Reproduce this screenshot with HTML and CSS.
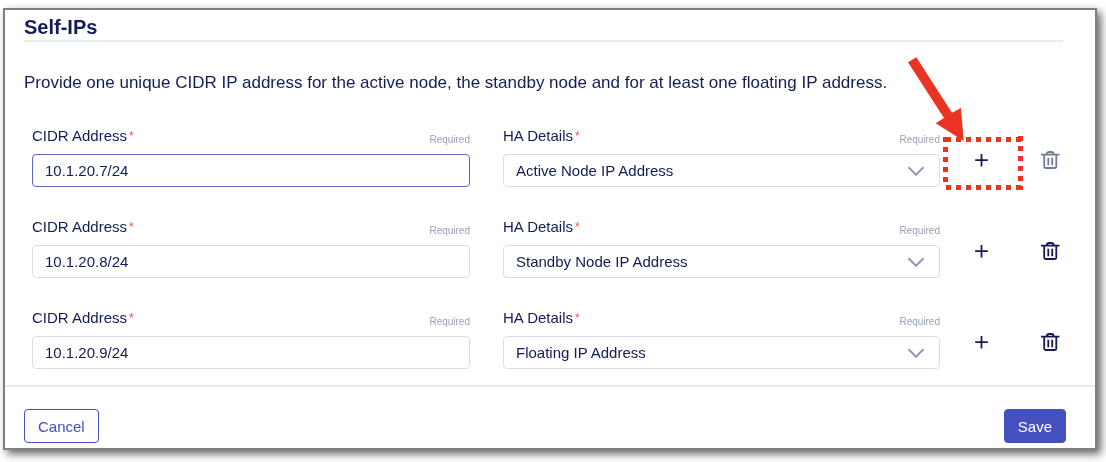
FILE: index.html
```html
<!DOCTYPE html>
<html lang="en">
<head>
<meta charset="utf-8">
<title>Self-IPs</title>
<link rel="stylesheet" href="styles.css">
</head>
<body>
<svg class="symbols" aria-hidden="true">
  <symbol id="plus" viewBox="0 0 24 24"><path d="M12.500 6v12.500M6.200 12.200h12.600"/></symbol>
  <symbol id="trash" viewBox="0 0 24 24"><path d="M3 6.600h18.500M6.200 6.600v11.900q0 1.500 1.500 1.500h9.100q1.500 0 1.500-1.500V6.600M8.700 6.300Q9 4 11 4h2.500q2 0 2.300 2.300M10.300 9.800v7.500M14.200 9.800v7.500"/></symbol>
  <symbol id="chevron" viewBox="0 0 18 10"><path d="M1.500 1.200 9 8.700l7.500-7.500"/></symbol>
</svg>
<form class="panel">
  <main class="content">
    <h2 class="title">Self-IPs</h2>
    <p class="intro">Provide one unique CIDR IP address for the active node, the standby node and for at least one floating IP address.</p>
    <div class="rows">
      <div class="row">
        <div class="field">
          <div class="caption"><label for="ip1">CIDR Address<span class="star">*</span></label><span class="required">Required</span></div>
          <input class="control active" id="ip1" type="text" value="10.1.20.7/24">
        </div>
        <div class="field">
          <div class="caption"><label for="ha1">HA Details<span class="star">*</span></label><span class="required">Required</span></div>
          <div class="picker">
            <select class="control" id="ha1"><option>Active Node IP Address</option></select>
            <svg class="chevron" aria-hidden="true"><use href="#chevron"/></svg>
          </div>
        </div>
        <div class="actions">
          <div class="callout-anchor">
            <button class="icon-button" type="button" aria-label="Add row"><svg class="icon"><use href="#plus"/></svg></button>
            <svg class="callout" viewBox="903 52 123 142" aria-hidden="true">
              <path class="arrow" d="M908 62.300 916.300 57.300 952 112.700 961 108 963.700 141 935.700 123.300 944 118Z"/>
              <path class="dots" d="M946 139.500H1023M1020.500 136V190M946 187.500H1023M945.500 137V184"/>
            </svg>
          </div>
          <button class="icon-button" type="button" aria-label="Delete row" disabled><svg class="icon"><use href="#trash"/></svg></button>
        </div>
      </div>
      <div class="row">
        <div class="field">
          <div class="caption"><label for="ip2">CIDR Address<span class="star">*</span></label><span class="required">Required</span></div>
          <input class="control" id="ip2" type="text" value="10.1.20.8/24">
        </div>
        <div class="field">
          <div class="caption"><label for="ha2">HA Details<span class="star">*</span></label><span class="required">Required</span></div>
          <div class="picker">
            <select class="control" id="ha2"><option>Standby Node IP Address</option></select>
            <svg class="chevron" aria-hidden="true"><use href="#chevron"/></svg>
          </div>
        </div>
        <div class="actions">
          <button class="icon-button" type="button" aria-label="Add row"><svg class="icon"><use href="#plus"/></svg></button>
          <button class="icon-button" type="button" aria-label="Delete row"><svg class="icon"><use href="#trash"/></svg></button>
        </div>
      </div>
      <div class="row">
        <div class="field">
          <div class="caption"><label for="ip3">CIDR Address<span class="star">*</span></label><span class="required">Required</span></div>
          <input class="control" id="ip3" type="text" value="10.1.20.9/24">
        </div>
        <div class="field">
          <div class="caption"><label for="ha3">HA Details<span class="star">*</span></label><span class="required">Required</span></div>
          <div class="picker">
            <select class="control" id="ha3"><option>Floating IP Address</option></select>
            <svg class="chevron" aria-hidden="true"><use href="#chevron"/></svg>
          </div>
        </div>
        <div class="actions">
          <button class="icon-button" type="button" aria-label="Add row"><svg class="icon"><use href="#plus"/></svg></button>
          <button class="icon-button" type="button" aria-label="Delete row"><svg class="icon"><use href="#trash"/></svg></button>
        </div>
      </div>
    </div>
  </main>
  <footer class="footer">
    <button class="button" type="button">Cancel</button>
    <button class="button primary" type="submit">Save</button>
  </footer>
</form>
</body>
</html>
```

FILE: styles.css
```css
* {
  box-sizing: border-box;
}

body {
  margin: 0;
  padding: 8px 9px 12px 3px;
  background: #fff;
  color: #131c56;
  font-family: "Liberation Sans", Arial, sans-serif;
  font-size: 15px;
}

.symbols {
  position: absolute;
  width: 0;
  height: 0;
}

.panel {
  border: 2px solid #808080;
  background: #fff;
  filter: drop-shadow(4px 4px 4px rgba(0, 0, 0, 0.6));
}

.content {
  padding: 5px 32px 16px 19px;
}

.title {
  margin: 0;
  border-bottom: 2px solid #e8ecf1;
  font-size: 20px;
  line-height: 25px;
}

.intro {
  margin: 29px 0 31px;
  font-size: 17px;
  line-height: 24px;
}

.rows {
  display: grid;
  gap: 30px;
  padding: 0 1px 0 8px;
}

.row {
  display: grid;
  grid-template-columns: 1fr 1fr auto;
}

.field + .field {
  margin-left: 17px;
}

.field:first-child {
  margin-right: 16px;
}

.caption {
  display: flex;
  justify-content: space-between;
  margin-bottom: 8px;
  line-height: 20px;
}

.star {
  margin-left: 2px;
  color: #f0563d;
  font-size: 12px;
  vertical-align: 1px;
  line-height: 12px;
}

.required {
  padding-top: 4px;
  color: #9a9fb9;
  font-size: 10px;
  line-height: 20px;
  height: 20px;
}

.control {
  display: block;
  width: 100%;
  height: 33px;
  padding: 0 12px;
  border: 1px solid #dcdee6;
  border-radius: 4px;
  outline: none;
  appearance: none;
  background: #fff;
  color: inherit;
  font: inherit;
}

.control.active {
  border-color: #5a6ac9;
}

.picker {
  position: relative;
}

.chevron {
  position: absolute;
  top: 12px;
  right: 15px;
  width: 18px;
  height: 10px;
  fill: none;
  stroke: #9197b3;
  stroke-width: 2;
  pointer-events: none;
}

.actions {
  display: flex;
  align-items: flex-start;
  gap: 45px;
  padding: 22px 0 0 29px;
}

.icon-button {
  display: block;
  padding: 0;
  border: 0;
  background: none;
  color: #131c56;
}

.icon-button:disabled {
  color: #747a9f;
}

.icon {
  display: block;
  width: 24px;
  height: 24px;
  fill: none;
  stroke: currentColor;
  stroke-width: 1.8;
}

.callout-anchor {
  position: relative;
}

.callout {
  position: absolute;
  top: -96px;
  left: -66px;
  width: 123px;
  height: 142px;
  pointer-events: none;
}

.arrow {
  fill: #ea3323;
}

.dots {
  fill: none;
  stroke: #ea3323;
  stroke-width: 5;
  stroke-dasharray: 5 5;
}

.footer {
  display: flex;
  justify-content: space-between;
  padding: 22px 29px 5px 19px;
  border-top: 2px solid #e6e8f4;
}

.button {
  height: 34px;
  padding: 0 13px;
  border: 1px solid #4350bd;
  border-radius: 4px;
  background: #fff;
  color: #4350bd;
  font: inherit;
}

.button.primary {
  background: #4350bd;
  color: #fff;
}
```
